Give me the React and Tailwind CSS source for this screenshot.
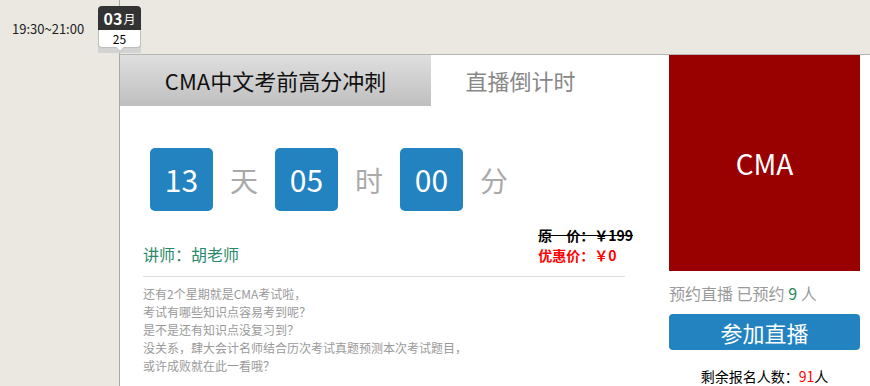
import React from 'react';

const font = { fontFamily: '"Noto Sans CJK SC", "Noto Sans", sans-serif' };

const CountBox = ({ value }) => (
  <div className="w-[63px] h-[63px] rounded-[5px] bg-[#2283c0] text-white text-[30px] flex items-center justify-center">
    {value}
  </div>
);

const Unit = ({ children }) => (
  <span className="w-[62px] text-center text-[28px] text-[#aaaaaa]">{children}</span>
);

const DateBadge = () => (
  <div className="absolute left-[98px] top-[6px] w-[43px]">
    <div className="absolute left-0 top-[34px] w-[43px] h-[13px] bg-[#d3d3d3]" />
    <div className="relative h-[24px] bg-[#333333] rounded-t-[4px] flex items-center justify-center text-white">
      <span className="text-[16px] font-bold leading-none">03</span>
      <span className="text-[12px] leading-none ml-[1px] mt-[2px]">月</span>
    </div>
    <div className="relative h-[18px] bg-white border border-t-0 border-[#bdbdbd] rounded-b-[4px] flex items-center justify-center text-[12px] leading-none text-black">
      25
      <span className="absolute left-1/2 -bottom-[4px] -translate-x-1/2 w-[6px] h-[6px] bg-white border-r border-b border-[#bdbdbd] rotate-45" />
    </div>
  </div>
);

export default function App() {
  return (
    <div className="w-[870px] h-[386px] bg-[#ebe8e1] flex overflow-hidden" style={font}>
      {/* timeline column */}
      <div className="relative w-[120px] shrink-0 border-r border-[#a9a9a9] z-10">
        <div className="pt-[19px] pl-[12px] text-[13px] text-[#222222]">19:30~21:00</div>
        <DateBadge />
      </div>

      {/* main */}
      <div className="flex-1 flex flex-col">
        <div className="h-[54px] shrink-0" />
        <div className="flex-1 bg-white border-t border-[#b5b5b5] flex">
          {/* left content */}
          <div className="w-[549px] shrink-0 flex flex-col">
            <div className="flex h-[51px]">
              <div className="w-[311px] bg-gradient-to-b from-[#dfdfdf] to-[#bfbfbf] flex items-center justify-center text-[22px] text-[#111111]">
                CMA中文考前高分冲刺
              </div>
              <div className="w-[179px] flex items-center justify-center text-[22px] text-[#888888]">
                直播倒计时
              </div>
            </div>

            <div className="flex items-center mt-[42px] pl-[30px]">
              <CountBox value="13" />
              <Unit>天</Unit>
              <CountBox value="05" />
              <Unit>时</Unit>
              <CountBox value="00" />
              <Unit>分</Unit>
            </div>

            <div className="flex items-end justify-between pl-[23px] pr-[36px] mt-[14px]">
              <div className="text-[16px] text-[#2a8a68] leading-[20px] pb-[1px]">讲师：胡老师</div>
              <div className="flex flex-col text-[14px] font-bold leading-[20px]">
                <span className="text-black line-through">原　价：￥199</span>
                <span className="text-[#ff0000]">优惠价：￥0</span>
              </div>
            </div>

            <div className="ml-[23px] mr-[44px] mt-[11px] border-t border-[#dddddd]" />

            <div className="pl-[23px] mt-[8px] text-[12px] leading-[18px] text-[#9a9a9a]">
              <p>还有2个星期就是CMA考试啦，</p>
              <p>考试有哪些知识点容易考到呢？</p>
              <p>是不是还有知识点没复习到？</p>
              <p>没关系，肆大会计名师结合历次考试真题预测本次考试题目，</p>
              <p>或许成败就在此一看哦？</p>
            </div>
          </div>

          {/* right column */}
          <div className="w-[191px] shrink-0 flex flex-col">
            <div className="h-[216px] bg-[#990000] flex items-center justify-center text-white text-[28px]">
              CMA
            </div>
            <div className="mt-[11px] text-[16px] text-[#9a9a9a] leading-[22px]">
              预约直播 已预约 <span className="text-[#1f8a5a]">9</span> 人
            </div>
            <button className="mt-[10px] h-[36px] rounded-[4px] bg-[#2283c0] text-white text-[22px] flex items-center justify-center">
              参加直播
            </button>
            <div className="mt-[18px] text-center text-[14px] text-black leading-[17px]">
              剩余报名人数：<span className="text-[#ff0000]">91</span>人
            </div>
          </div>
        </div>
      </div>
    </div>
  );
}
